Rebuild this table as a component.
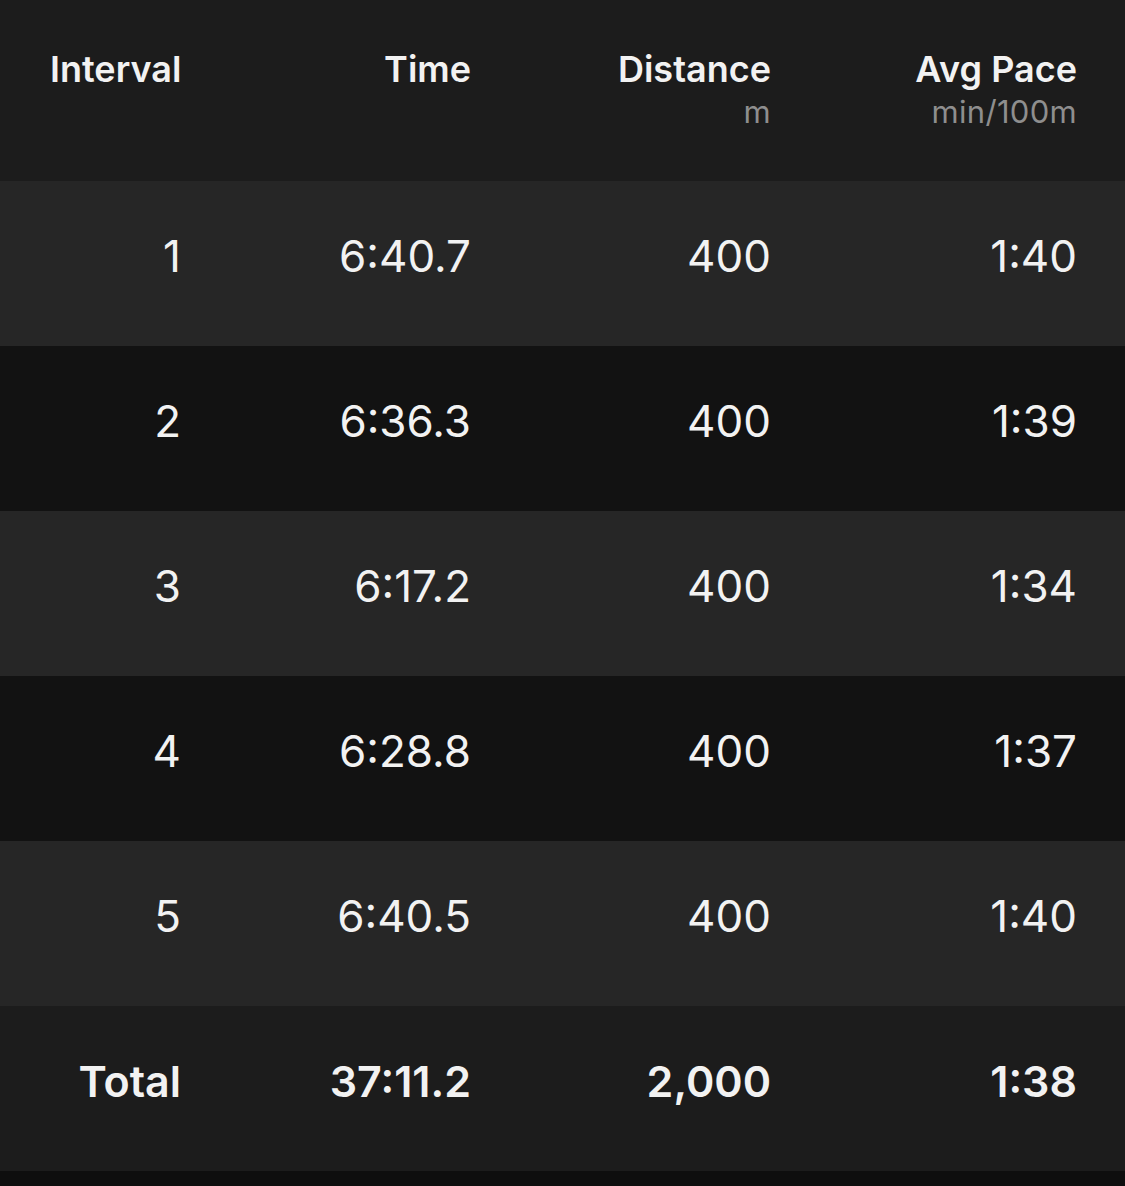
const intervals = [
  { n: "1", time: "6:40.7", dist: "400", pace: "1:40" },
  { n: "2", time: "6:36.3", dist: "400", pace: "1:39" },
  { n: "3", time: "6:17.2", dist: "400", pace: "1:34" },
  { n: "4", time: "6:28.8", dist: "400", pace: "1:37" },
  { n: "5", time: "6:40.5", dist: "400", pace: "1:40" },
];

// column edges: 181 / 469 / 769 / 1075 (the -mr-[2px] evens out Inter's side bearing)
const cols = "grid grid-cols-[131px_288px_300px_306px] pl-[50px] pr-[50px]";

const App = () => {
  return (
    <main className="min-h-screen bg-[#0e0e0e] text-[#f2f2f2] font-['Inter',sans-serif]">
      <div className={`${cols} bg-[#1c1c1c] h-[181px] pt-[51px] text-right`}>
        <div className="text-left text-[36px] leading-none font-semibold">Interval</div>
        <div className="-mr-[2px] text-[36px] leading-none font-semibold">Time</div>
        <div className="-mr-[2px]">
          <div className="text-[36px] leading-none font-semibold">Distance</div>
          <div className="mt-[9px] text-[31px] leading-none tracking-[0.3px] text-[#8e8e8e]">m</div>
        </div>
        <div className="-mr-[2px]">
          <div className="text-[36px] leading-none font-semibold">Avg Pace</div>
          <div className="mt-[9px] text-[31px] leading-none tracking-[0.3px] text-[#8e8e8e]">min/100m</div>
        </div>
      </div>

      {intervals.map((row, i) => (
        <div
          key={row.n}
          className={`${cols} h-[165px] items-center pb-[15px] text-right text-[44px] leading-none ${
            i % 2 === 0 ? "bg-[#262626]" : "bg-[#121212]"
          }`}
        >
          <div>{row.n}</div>
          <div className="-mr-[2px]">{row.time}</div>
          <div className="-mr-[2px]">{row.dist}</div>
          <div className="-mr-[2px]">{row.pace}</div>
        </div>
      ))}

      <div className={`${cols} h-[165px] items-center pb-[15px] text-right text-[43px] leading-none font-semibold bg-[#1c1c1c]`}>
        <div>Total</div>
        <div className="-mr-[2px]">37:11.2</div>
        <div className="-mr-[2px]">2,000</div>
        <div className="-mr-[2px]">1:38</div>
      </div>
    </main>
  );
};

export default App;
